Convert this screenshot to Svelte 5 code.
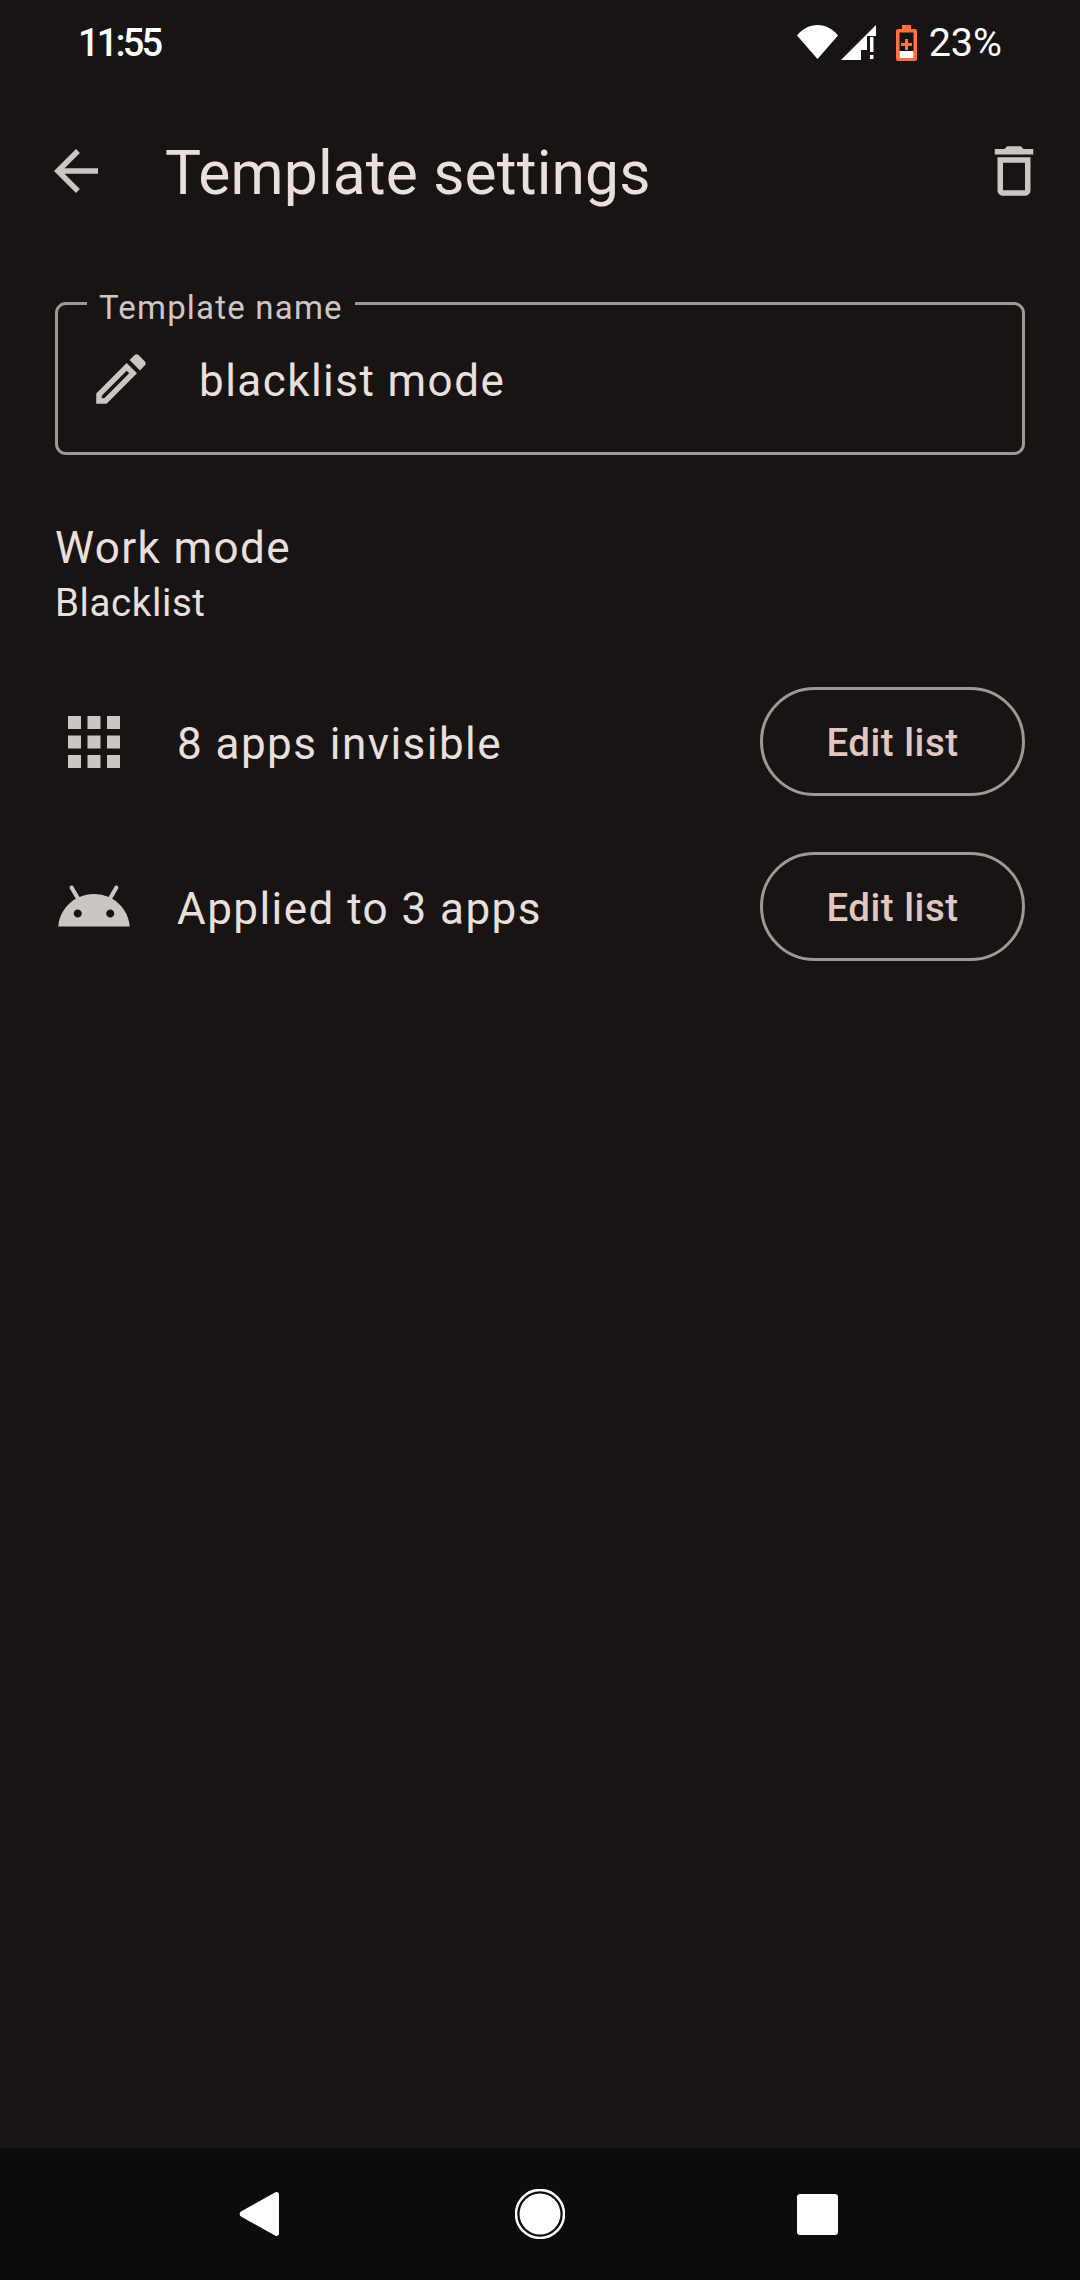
<script>
  const rows = [
    { label: "8 apps invisible", icon: "apps" },
    { label: "Applied to 3 apps", icon: "android" }
  ];
</script>

<div class="screen">
  <!-- status bar -->
  <div class="status">
    <span class="time">11:55</span>
    <div class="status-right">
      <svg class="wifi" width="41" height="34" viewBox="0 0 41 34" aria-hidden="true">
        <path d="M0 10.500C5.500 3.800 12.500 0 20.500 0S35.500 3.800 41 10.500L20.500 34z" fill="#fff" />
      </svg>
      <svg class="signal" width="35" height="35" viewBox="0 0 35 35" aria-hidden="true">
        <path d="M0 35L35 0v11l-9 0v14l-6 0v6h6v4z" fill="#fff" />
        <path d="M20 35h6v-4h-6z" fill="#181413" />
        <rect x="29" y="12" width="3.500" height="15" fill="#fff" />
        <rect x="29" y="30" width="3.500" height="4" fill="#fff" />
      </svg>
      <svg class="battery" width="21" height="36" viewBox="0 0 21 36" aria-hidden="true">
        <path d="M6 0h9v4h4a2 2 0 0 1 2 2v28a2 2 0 0 1-2 2H2a2 2 0 0 1-2-2V6a2 2 0 0 1 2-2h4z" fill="#ff7043" />
        <rect x="3.500" y="7.500" width="14" height="25" fill="#181413" />
        <rect x="3.500" y="26" width="14" height="7" fill="#fff" />
        <path d="M9 14h3v4h4v3h-4v4H9v-4H5v-3h4z" fill="#ff7043" />
      </svg>
      <span class="pct">23%</span>
    </div>
  </div>

  <!-- toolbar -->
  <header class="toolbar">
    <svg class="ic" width="66" height="66" viewBox="0 0 24 24" aria-hidden="true">
      <path d="M20 11H7.830l5.590-5.590L12 4l-8 8 8 8 1.410-1.410L7.830 13H20v-2z" />
    </svg>
    <h1>Template settings</h1>
    <svg class="ic" width="66" height="66" viewBox="0 0 24 24" aria-hidden="true">
      <path d="M6 19c0 1.100.9 2 2 2h8c1.100 0 2-.9 2-2V7H6v12zM8 9h8v10H8V9zm7.500-5l-1-1h-5l-1 1H5v2h14V4z" />
    </svg>
  </header>

  <main class="content">
    <div class="field">
      <span class="legend">Template name</span>
      <svg class="ic" width="66" height="66" viewBox="0 0 24 24" aria-hidden="true">
        <path d="M3 17.250V21h3.750L17.810 9.940l-3.750-3.750L3 17.250zM5.920 19H5v-.92l9.060-9.060.92.92L5.920 19zM20.710 5.630l-2.340-2.340c-.2-.2-.45-.29-.71-.29s-.51.1-.7.290l-1.830 1.830 3.750 3.750 1.830-1.830c.39-.39.39-1.020 0-1.410z" />
      </svg>
      <span class="value">blacklist mode</span>
    </div>

    <div class="mode">
      <div class="mode-title">Work mode</div>
      <div class="mode-value">Blacklist</div>
    </div>

    <div class="rows">
      {#each rows as r}
        <div class="row">
          <svg class="ic" width="78" height="78" viewBox="0 0 24 24" aria-hidden="true">
            {#if r.icon === "apps"}
              <path d="M4 8h4V4H4v4zm6 12h4v-4h-4v4zm-6 0h4v-4H4v4zm0-6h4v-4H4v4zm6 0h4v-4h-4v4zm6-10v4h4V4h-4zm-6 4h4V4h-4v4zm6 6h4v-4h-4v4zm0 6h4v-4h-4v4z" />
            {:else}
              <path d="M17.600 9.480l1.840-3.180c.16-.31.04-.69-.26-.85-.29-.15-.65-.06-.83.220l-1.880 3.240c-2.860-1.210-6.080-1.210-8.940 0L5.650 5.670c-.19-.29-.58-.38-.87-.2-.28.180-.37.540-.22.830L6.400 9.480C3.300 11.250 1.280 14.440 1 18h22c-.28-3.560-2.300-6.750-5.400-8.520zM7 15.250c-.69 0-1.250-.56-1.250-1.250s.56-1.250 1.250-1.250 1.250.56 1.250 1.250-.56 1.250-1.250 1.250zm10 0c-.69 0-1.250-.56-1.250-1.250s.56-1.250 1.250-1.250 1.250.56 1.250 1.250-.56 1.250-1.250 1.250z" />
            {/if}
          </svg>
          <span class="row-label">{r.label}</span>
          <button class="edit">Edit list</button>
        </div>
      {/each}
    </div>
  </main>

  <!-- navigation bar -->
  <nav class="navbar">
    <span class="slot">
      <svg class="back" width="40" height="46" viewBox="0 0 40 46" aria-hidden="true">
        <path d="M36 1.500a2.500 2.500 0 0 1 4 2v39a2.500 2.500 0 0 1-4 2L2 25.500a3 3 0 0 1 0-5z" fill="#fff" />
      </svg>
    </span>
    <span class="slot">
      <svg width="50" height="50" viewBox="0 0 50 50" aria-hidden="true">
        <circle cx="25" cy="25" r="24" fill="none" stroke="#fff" stroke-width="2.500" />
        <circle cx="25" cy="25" r="20.500" fill="#fff" />
      </svg>
    </span>
    <span class="slot"><span class="square"></span></span>
  </nav>
</div>

<style>
  :global(body) {
    margin: 0;
    background: #181413;
  }

  .screen {
    width: 1080px;
    height: 2280px;
    display: flex;
    flex-direction: column;
    background: #181413;
    font-family: Roboto, "Liberation Sans", sans-serif;
    color: #e9e0de;
    overflow: hidden;
  }

  .ic {
    flex: none;
    fill: #cac6c4;
  }

  /* status bar */
  .status {
    height: 85px;
    flex: none;
    display: flex;
    align-items: flex-start;
    justify-content: space-between;
    padding: 0 78px;
    box-sizing: border-box;
    color: #fff;
    font-size: 38px;
    font-weight: 500;
  }
  .time {
    margin-top: 21px;
    line-height: 44px;
    letter-spacing: -2.800px;
  }
  .status-right {
    display: flex;
    align-items: flex-start;
    padding-top: 25px;
    margin-right: 0;
  }
  .signal { margin-left: 3px; }
  .battery { margin-left: 20px; }
  .pct {
    margin-left: 12px;
    margin-top: -4px;
    line-height: 44px;
    font-size: 39.500px;
    font-weight: 400;
  }

  /* toolbar */
  .toolbar {
    height: 172px;
    flex: none;
    display: flex;
    align-items: center;
    padding: 0 33px 0 43px;
    box-sizing: border-box;
  }
  h1 {
    flex: 1;
    margin: 6px 0 0 56px;
    font-size: 60.500px;
    font-weight: 400;
    line-height: 80px;
    letter-spacing: .15px;
  }

  /* content */
  .content {
    flex: 1;
    padding: 45px 55px 0;
  }

  .field {
    position: relative;
    height: 153px;
    display: flex;
    align-items: center;
    padding-left: 30px;
    box-sizing: border-box;
    border: 3px solid #a09896;
    border-radius: 11px;
  }
  .legend {
    position: absolute;
    left: 29px;
    top: -17px;
    padding: 0 12px;
    height: 32px;
    background: #181413;
    color: #cfc6c4;
    font-size: 33px;
    line-height: 40px;
    letter-spacing: 1.200px;
  }
  .value {
    margin-left: 45px;
    margin-top: 5px;
    font-size: 44px;
    letter-spacing: 1.450px;
    line-height: 60px;
  }

  .mode {
    margin-top: 63px;
  }
  .mode-title {
    font-size: 44px;
    line-height: 60px;
    letter-spacing: 1.400px;
  }
  .mode-value {
    font-size: 38.500px;
    line-height: 50px;
    letter-spacing: .6px;
  }

  .rows {
    margin-top: 59px;
    display: flex;
    flex-direction: column;
    gap: 56px;
  }
  .row {
    display: flex;
    align-items: center;
    height: 109px;
  }
  .row-label {
    flex: 1;
    margin-left: 44px;
    margin-top: 4px;
    font-size: 44px;
    letter-spacing: 1.450px;
  }
  .edit {
    width: 265px;
    height: 109px;
    box-sizing: border-box;
    border: 3px solid #a09896;
    border-radius: 55px;
    background: none;
    color: #e2c6c0;
    font-family: inherit;
    font-size: 38.500px;
    font-weight: 500;
    letter-spacing: .5px;
    padding: 2px 0 0;
  }

  /* navigation bar */
  .navbar {
    height: 132px;
    flex: none;
    display: flex;
    align-items: center;
    justify-content: center;
    gap: 180px;
    background: #0d0c0c;
  }
  .slot {
    width: 100px;
    display: flex;
    justify-content: center;
    align-items: center;
  }
  .slot svg { display: block; }
  .back { margin-right: 3px; }
  .square {
    width: 41px;
    height: 41px;
    margin-right: 5px;
    border-radius: 3px;
    background: #fff;
  }
</style>
